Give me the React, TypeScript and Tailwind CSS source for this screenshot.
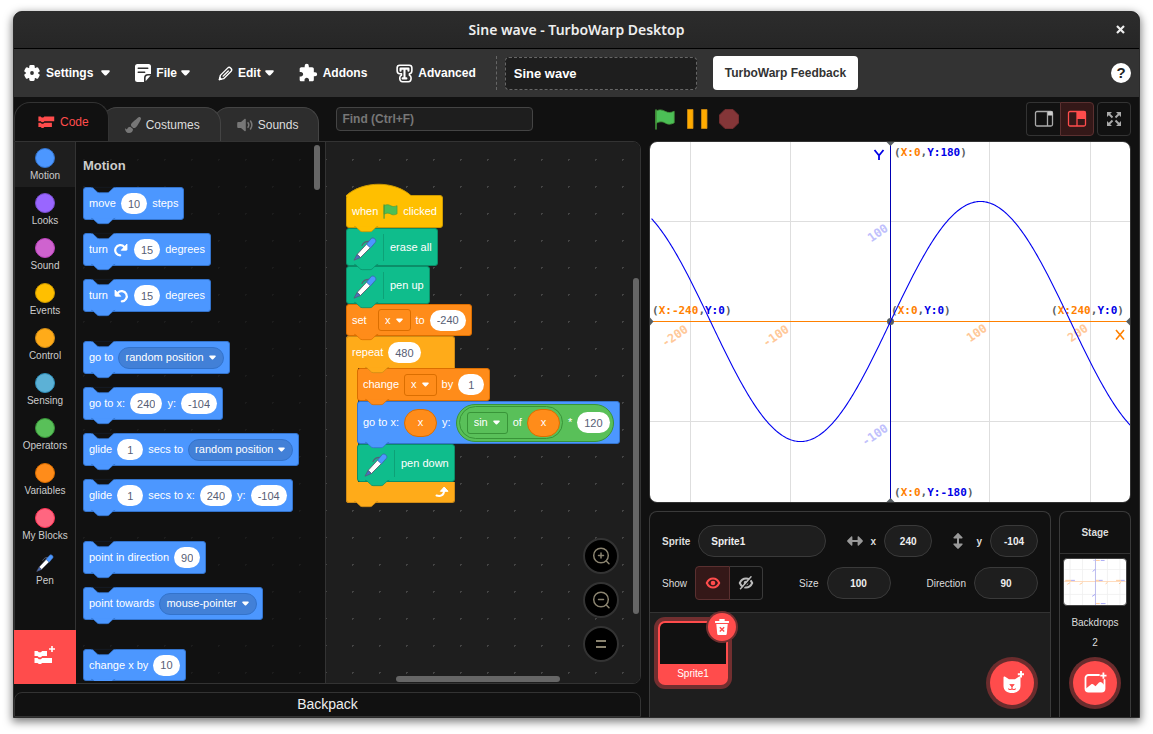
import React from "react";
import { MdExtension } from "react-icons/md";
import { FaPaintBrush } from "react-icons/fa";

type Tone = "motion" | "events" | "control" | "variables" | "operators" | "pen";

const tones: Record<Tone, { body: string; shape: string; menu: string }> = {
  motion: { body: "bg-[#4c97ff] border-[#3373cc]", shape: "fill-[#4c97ff] stroke-[#3373cc]", menu: "bg-[#4280d7] border-[#3373cc]" },
  events: { body: "bg-[#ffbf00] border-[#cc9900]", shape: "fill-[#ffbf00] stroke-[#cc9900]", menu: "bg-[#ffbf00] border-[#cc9900]" },
  control: { body: "bg-[#ffab19] border-[#cf8b17]", shape: "fill-[#ffab19] stroke-[#cf8b17]", menu: "bg-[#ffab19] border-[#cf8b17]" },
  variables: { body: "bg-[#ff8c1a] border-[#db6e00]", shape: "fill-[#ff8c1a] stroke-[#db6e00]", menu: "bg-[#ff8c1a] border-[#db6e00]" },
  operators: { body: "bg-[#59c059] border-[#389438]", shape: "fill-[#59c059] stroke-[#389438]", menu: "bg-[#59c059] border-[#389438]" },
  pen: { body: "bg-[#0fbd8c] border-[#0b8e69]", shape: "fill-[#0fbd8c] stroke-[#0b8e69]", menu: "bg-[#0fbd8c] border-[#0b8e69]" },
};

const notchPath = "M0 0c2 0 3 1 4 2l4 4c1 1 2 2 4 2h12c2 0 3 -1 4 -2l4 -4c1 -1 2 -2 4 -2";

function Bump({ tone, inner }: { tone: Tone; inner?: boolean }) {
  return (
    <svg
      viewBox="0 -2 40 12"
      className={`pointer-events-none absolute -bottom-[6px] z-10 h-[8px] w-[27px] ${inner ? "left-[18px]" : "left-[7px]"} ${tones[tone].shape}`}
      strokeWidth="1.200"
    >
      <path d="M0 -2h36v2.500H0z" stroke="none" />
      <path d={notchPath} />
    </svg>
  );
}

function Notch() {
  return (
    <svg viewBox="0 -2 40 12" className="pointer-events-none absolute -top-[2px] left-[7px] h-[8px] w-[27px] fill-[#121212] stroke-[#3373cc]" strokeWidth="1.200">
      <path d="M0 -2h36v2.500H0z" stroke="none" />
      <path d={notchPath} />
    </svg>
  );
}

function Block({
  tone,
  children,
  height = "h-[33px]",
  notch,
}: {
  tone: Tone;
  children?: React.ReactNode;
  height?: string;
  notch?: boolean;
}) {
  return (
    <div
      className={`relative flex w-max items-center gap-[5px] rounded-[3px] border px-[5px] text-[11px] leading-none whitespace-nowrap text-white ${height} ${tones[tone].body}`}
    >
      {notch && <Notch />}
      {children}
      <Bump tone={tone} />
    </div>
  );
}

function Num({ value, label }: { value: string; label: string }) {
  return (
    <input
      aria-label={label}
      defaultValue={value}
      className="field-sizing-content h-[21px] min-w-[26px] rounded-full bg-white px-[7px] text-center text-[11px] text-[#575e75] outline-none"
    />
  );
}

function Caret({ className = "" }: { className?: string }) {
  return (
    <svg viewBox="0 0 10 6" className={`fill-white ${className}`}>
      <path d="M1.400 0h7.200c1 0 1.500 1.100.8 1.800L6 5.400c-.6.600-1.400.600-2 0L.6 1.800C-.1 1.100.4 0 1.400 0z" />
    </svg>
  );
}

function Menu({ tone, value, label, round }: { tone: Tone; value: string; label: string; round?: boolean }) {
  return (
    <span className="relative flex items-center">
      <select
        aria-label={label}
        defaultValue={value}
        className={`field-sizing-content h-[22px] appearance-none border pr-[19px] pl-[6px] text-[11px] text-white outline-none ${round ? "rounded-full" : "rounded-[3px]"} ${tones[tone].menu}`}
      >
        <option>{value}</option>
      </select>
      <Caret className="pointer-events-none absolute right-[8px] h-[5px] w-[7px]" />
    </span>
  );
}

function VarX() {
  return (
    <span className="flex h-[28px] w-[33px] items-center justify-center rounded-full border border-[#db6e00] bg-[#ff8c1a]">x</span>
  );
}

function PenIcon({ className = "" }: { className?: string }) {
  return (
    <svg viewBox="0 0 24 24" className={className}>
      <path d="M9 8.500c1.500-3 4-4.500 8-4" fill="none" stroke="#575e75" strokeWidth="1.200" strokeLinecap="round" />
      <path d="M4 17.500 15.500 5l4 3.500L7.500 20.500z" fill="#fff" stroke="#575e75" strokeWidth=".9" strokeLinejoin="round" />
      <path d="M13.500 7.200 18.200 1.600c2-2 6 1.300 4.200 3.700L17.500 10.900z" fill="#4c97ff" stroke="#3a67a8" strokeWidth=".8" strokeLinejoin="round" />
      <path d="M4 17.500 1 23.200l6.500-2.700z" fill="#4c6fc0" stroke="#575e75" strokeWidth=".8" strokeLinejoin="round" />
    </svg>
  );
}

function PenLabel({ text }: { text: string }) {
  return (
    <>
      <PenIcon className="mt-[4px] ml-px size-[24px]" />
      <span className="mx-px h-[27px] w-px bg-[#0b8e69]/60" />
      {text}
    </>
  );
}

function Flag({ className = "" }: { className?: string }) {
  return (
    <svg viewBox="0 0 20 21" className={className}>
      <path d="M1 2.200c4-2.400 7-1 9.500.3 2.700 1.400 5 1.400 8.700-.2v11.500c-3.600 2-6.200 1.700-9 .2-2.700-1.500-5-1.800-9.200.3z" fill="#4cbf56" stroke="#45993d" strokeWidth=".8" />
      <path d="M1 1v19" stroke="#45993d" strokeWidth="1.600" strokeLinecap="round" />
    </svg>
  );
}

function Turn({ left }: { left?: boolean }) {
  return (
    <svg viewBox="0 0 16 16" className="size-[16px]">
      <g transform={left ? "matrix(-1 0 0 1 16 0)" : undefined}>
        <path d="M7.200 13.300A5.100 5.100 0 1 1 11.300 5" fill="none" stroke="#fff" strokeWidth="2.200" strokeLinecap="round" />
        <path d="M14 2v5.600c0 .5-.3.700-.8.700H8.200z" fill="#fff" stroke="#fff" strokeWidth=".8" strokeLinejoin="round" />
      </g>
    </svg>
  );
}

function BlocksIcon({ className = "", plus }: { className?: string; plus?: boolean }) {
  return (
    <svg viewBox="0 0 22 18" className={`fill-current ${className}`}>
      <path d={plus ? "M.5 5h3l1.300 1.200h2L8.200 5H13v5H8.200l-1.300 1.200h-2L3.500 10h-3z" : "M.5 2h3l1.300 1.200h2L8.200 2H21v6H8.200L6.900 9.200h-2L3.500 8h-3z"} />
      <path d={plus ? "M.5 12h3l1.300 1.200h2L8.200 12H18v5H8.200l-1.300 1h-2l-1.400-1h-3z" : "M.5 10h3l1.300 1.200h2L8.200 10H18v5.500H8.200l-1.300 1.200h-2l-1.400-1.200h-3z"} />
      {plus && <path d="M17.200 0h1.600v2.200H21v1.600h-2.200V6h-1.600V3.800H15V2.200h2.200z" />}
    </svg>
  );
}

function Gear() {
  return (
    <svg viewBox="0 0 20 20" className="size-[18px] fill-white">
      {[0, 60, 120, 180, 240, 300].map((a) => (
        <rect key={a} x="7" y="1.200" width="6" height="6" rx="1.500" transform={`rotate(${a} 10 10)`} />
      ))}
      <circle cx="10" cy="10" r="6.600" />
      <circle cx="10" cy="10" r="2.100" className="fill-[#333]" />
    </svg>
  );
}

function FileIcon() {
  return (
    <svg viewBox="0 0 16 18" className="h-[18px] w-[16px]">
      <path d="M2.500 0h11A2.500 2.500 0 0 1 16 2.500v7.500H13a4 4 0 0 0-4 4v4H2.500A2.500 2.500 0 0 1 0 15.500v-13A2.500 2.500 0 0 1 2.500 0z" fill="#fff" />
      <path d="M10.600 17.300V14a2.500 2.500 0 0 1 2.500-2.500h2.500z" fill="#fff" />
      <path d="M3.200 4.300h9.600M3.200 8.200h6.500" stroke="#333" strokeWidth="1.400" strokeLinecap="round" />
    </svg>
  );
}

function EditIcon() {
  return (
    <svg viewBox="0 0 16 16" className="size-[15px]" fill="none" stroke="#fff" strokeWidth="1.500" strokeLinejoin="round" strokeLinecap="round">
      <path d="M1.500 14.500l1-4.500 8-8c1.900-1.900 5.400 1.500 3.500 3.500l-8 8z" />
      <path d="M5.500 10.800l5.500-5.500" strokeWidth="1.500" />
      <path d="M1.500 14.500l.5-2 1.500 1.500z" fill="#fff" />
    </svg>
  );
}

function AdvancedIcon() {
  return (
    <svg viewBox="0 0 18 20" className="h-[19px] w-[17px]" fill="none" strokeLinecap="round" strokeLinejoin="round">
      <path
        d="M4 1.200h10c1.800 0 2.800 1 2.800 2.800v3.200c0 2-.9 3-2.600 3v1.600c1.300.4 1.800 1.400 1.800 2.900 0 2.700-1 4-3 4H7c-2 0-3-1.300-3-4 0-1.500.5-2.500 1.800-2.900v-1.600H3.800c-1.700 0-2.600-1-2.600-3V4C1.200 2.200 2.200 1.200 4 1.200z"
        stroke="#fff"
        strokeWidth="1.700"
      />
      <path d="M4.800 7V4.800h8.400V7M9 5v10M7 15.200h4" stroke="#fff" strokeWidth="2.200" />
    </svg>
  );
}

function SpeakerIcon() {
  return (
    <svg viewBox="0 0 16 14" className="h-[14px] w-[16px]">
      <path d="M1.500 4H4l3.500-3c.6-.5 1.300-.2 1.300.6v10.800c0 .8-.7 1.100-1.300.6L4 10H1.500C.7 10 .2 9.500.2 8.700V5.300C.2 4.500.7 4 1.500 4z" fill="#777" />
      <path d="M11 4.800c1 1.400 1 3 0 4.400M13.500 3c1.700 2.500 1.700 5.500 0 8" fill="none" stroke="#777" strokeWidth="1.500" strokeLinecap="round" />
    </svg>
  );
}

function MenuButton({ icon, label, caret, className = "" }: { icon: React.ReactNode; label: string; caret?: string; className?: string }) {
  return (
    <button className={`flex items-center ${className}`}>
      {icon}
      <span className="ml-[5px]">{label}</span>
      {caret && <Caret className={`h-[6px] w-[9px] ${caret}`} />}
    </button>
  );
}

const categories = [
  ["Motion", "bg-[#4c97ff] border-[#3373cc]"],
  ["Looks", "bg-[#9966ff] border-[#774dcb]"],
  ["Sound", "bg-[#cf63cf] border-[#bd42bd]"],
  ["Events", "bg-[#ffbf00] border-[#cc9900]"],
  ["Control", "bg-[#ffab19] border-[#cf8b17]"],
  ["Sensing", "bg-[#5cb1d6] border-[#2e8eb8]"],
  ["Operators", "bg-[#59c059] border-[#389438]"],
  ["Variables", "bg-[#ff8c1a] border-[#db6e00]"],
  ["My Blocks", "bg-[#ff6680] border-[#ff3355]"],
  ["Pen", ""],
];

function Categories() {
  return (
    <nav className="flex w-[61px] shrink-0 flex-col border-r border-[#333]">
      <div className="flex min-h-0 flex-1 flex-col overflow-hidden">
        {categories.map(([name, color], i) => (
          <button key={name} className={`flex h-[45px] shrink-0 flex-col items-center pt-[6px] text-[10px] text-[#ccc] ${i === 0 ? "bg-[#1e1e1e]" : ""}`}>
            {color ? <span className={`size-[20px] rounded-full border ${color}`} /> : <PenIcon className="my-[1px] size-[18px]" />}
            <span className="mt-px leading-[14px] whitespace-nowrap">{name}</span>
          </button>
        ))}
      </div>
      <button aria-label="Add Extension" className="-mx-px -mb-px flex h-[54px] shrink-0 items-center justify-center bg-[#ff4c4c] pb-[4px] text-white">
        <BlocksIcon plus className="h-[18px] w-[22px]" />
      </button>
    </nav>
  );
}

function Palette() {
  return (
    <section className="relative w-[250px] shrink-0 overflow-hidden border-r border-[#333] pb-[2px]">
      <div className="flex h-full flex-col gap-[29px] overflow-hidden bg-[radial-gradient(circle,#1c1c1c_1px,transparent_1px)] bg-[length:27px_27px] bg-[position:-6px_4px] pl-[7px]">
        <div className="flex flex-col gap-[13px]">
          <h2 className="-mb-px pt-[15px] text-[13px] leading-[18px] font-bold text-[#ccc]">Motion</h2>
          <Block tone="motion" notch>move <Num value="10" label="steps" /> steps</Block>
          <Block tone="motion" notch>turn <Turn /> <Num value="15" label="degrees clockwise" /> degrees</Block>
          <Block tone="motion" notch>turn <Turn left /> <Num value="15" label="degrees counterclockwise" /> degrees</Block>
        </div>
        <div className="flex flex-col gap-[13px]">
          <Block tone="motion" notch>go to <Menu round tone="motion" value="random position" label="go to target" /></Block>
          <Block tone="motion" notch>go to x: <Num value="240" label="x" /> y: <Num value="-104" label="y" /></Block>
          <Block tone="motion" notch>glide <Num value="1" label="seconds" /> secs to <Menu round tone="motion" value="random position" label="glide target" /></Block>
          <Block tone="motion" notch>glide <Num value="1" label="seconds" /> secs to x: <Num value="240" label="x" /> y: <Num value="-104" label="y" /></Block>
        </div>
        <div className="flex flex-col gap-[13px]">
          <Block tone="motion" notch>point in direction <Num value="90" label="direction" /></Block>
          <Block tone="motion" notch>point towards <Menu round tone="motion" value="mouse-pointer" label="point target" /></Block>
        </div>
        <Block tone="motion" notch>change x by <Num value="10" label="change x" /></Block>
      </div>
      <div className="absolute top-[3px] right-[5px] h-[45px] w-[6px] rounded-full bg-[#666]" />
    </section>
  );
}

function Script() {
  return (
    <div className="absolute top-[53px] left-[20px] flex flex-col">
      <div className="relative">
        <Block tone="events">when <Flag className="size-[15px]" /> clicked</Block>
        <svg viewBox="0 -18 96 20" className="absolute -top-[12px] left-0 h-[14px] w-[65px] fill-[#ffbf00]">
          <path d="M0 2V0c25 -22 71 -22 96 0v2z" />
          <path d="M.7 0c25 -22 70 -22 95 0" fill="none" stroke="#cc9900" strokeWidth="1.400" />
        </svg>
      </div>
      <Block tone="pen" height="h-[38px]"><PenLabel text="erase all" /></Block>
      <Block tone="pen" height="h-[38px]"><PenLabel text="pen up" /></Block>
      <Block tone="variables" height="h-[32px]">
        <span className="min-w-[21px]">set</span> <Menu tone="variables" value="x" label="variable" /> to <Num value="-240" label="value" />
      </Block>
      <div className="relative flex w-max flex-col">
        <div className="absolute inset-y-0 left-0 w-[12px] rounded-[3px] border-l border-[#cf8b17] bg-[#ffab19]" />
        <div className="relative flex h-[32px] w-[109px] items-center gap-[5px] rounded-t-[3px] border border-b-0 border-[#cf8b17] bg-[#ffab19] px-[5px] text-[11px] text-white">
          repeat <Num value="480" label="times" />
          <Bump tone="control" inner />
        </div>
        <div className="relative flex flex-col pl-[11px]">
          <Block tone="variables">change <Menu tone="variables" value="x" label="variable" /> by <Num value="1" label="amount" /></Block>
          <Block tone="motion" height="h-[43px]">
            go to x: <VarX /> y:
            <span className="flex h-[38px] items-center gap-[5px] rounded-full border border-[#389438] bg-[#59c059] pr-[3px] pl-[2px]">
              <span className="flex h-[33px] items-center gap-[5px] rounded-full border border-[#389438] pr-[2px] pl-[7px]">
                <Menu tone="operators" value="sin" label="function" /> of <VarX />
              </span>
              * <Num value="120" label="multiplier" />
            </span>
          </Block>
          <Block tone="pen" height="h-[38px]"><PenLabel text="pen down" /></Block>
        </div>
        <div className="relative z-0 flex h-[21px] w-[109px] items-center justify-end rounded-b-[3px] border border-t-0 border-[#cf8b17] bg-[#ffab19] pr-[5px]">
          <svg viewBox="0 0 14 12" className="h-[12px] w-[14px]">
            <path d="M1.500 9.500c3.500 1 7.500.3 7.500-4.500" fill="none" stroke="#fff" strokeWidth="2" strokeLinecap="round" />
            <path d="M9.200 1 13 5.300H5.400z" fill="#fff" stroke="#fff" strokeLinejoin="round" />
          </svg>
          <Bump tone="control" />
        </div>
      </div>
    </div>
  );
}

function ZoomButton({ label, children }: { label: string; children: React.ReactNode }) {
  return (
    <button aria-label={label} className="flex size-[36px] items-center justify-center rounded-full border-2 border-[#333] bg-black">
      <svg viewBox="0 0 20 20" className="size-[20px]" fill="none" stroke="#8a836f" strokeWidth="1.500" strokeLinecap="round">
        {children}
      </svg>
    </button>
  );
}

function Workspace() {
  return (
    <section className="relative min-w-0 flex-1 overflow-hidden rounded-r-[7px] bg-[#1e1e1e] bg-[radial-gradient(circle,#444_1px,transparent_1px)] bg-[length:27px_27px] bg-[position:13px_4px]">
      <Script />
      <div className="absolute right-[21px] bottom-[21px] flex flex-col gap-[8px]">
        <ZoomButton label="Zoom in">
          <circle cx="10" cy="9.500" r="7.300" />
          <path d="M15.300 15 18 17.700M7.500 9.500h5M10 7v5" />
        </ZoomButton>
        <ZoomButton label="Zoom out">
          <circle cx="10" cy="9.500" r="7.300" />
          <path d="M15.300 15 18 17.700M7.500 9.500h5" />
        </ZoomButton>
        <ZoomButton label="Reset zoom">
          <path d="M5 7h10M5 13h10" strokeWidth="2" strokeLinecap="butt" />
        </ZoomButton>
      </div>
      <div className="absolute top-[136px] right-px bottom-[69px] w-[6px] rounded-full bg-[#666]" />
      <div className="absolute right-[80px] bottom-px left-[70px] h-[6px] rounded-full bg-[#666]" />
    </section>
  );
}

const curve = Array.from({ length: 480 }, (_, i) => {
  const x = i - 239;
  return `${i === 0 ? "M" : "L"}${x + 240.5} ${(179.5 - 120 * Math.sin((x * Math.PI) / 180)).toFixed(2)}`;
}).join("");

function Coord({ x, y, cx, cy }: { x: number; y: number; cx: string; cy: string }) {
  return (
    <text x={x} y={y} className="fill-[#575e62] font-['DejaVu_Sans_Mono',monospace] text-[11px] font-bold">
      (<tspan className="fill-[#ff8000]">X:{cx}</tspan>,<tspan className="fill-[#0000e6]">Y:{cy}</tspan>)
    </text>
  );
}

function Tick({ x, y, children, blue }: { x: number; y: number; children: string; blue?: boolean }) {
  return (
    <text
      x={x}
      y={y}
      transform={`rotate(-35 ${x} ${y})`}
      textAnchor="end"
      className={`font-['DejaVu_Sans_Mono',monospace] text-[12px] font-bold ${blue ? "fill-[#c0c0fc]" : "fill-[#ffc898]"}`}
    >
      {children}
    </text>
  );
}

function Plot() {
  return (
    <svg viewBox="0 0 480 360" className="block w-full bg-white">
      <path d="M40.500 0v360M140.500 0v360M339.500 0v360M440.500 0v360M0 79.500h480M0 279.500h480" stroke="#dedede" />
      <path d="M0 179.500h480" stroke="#ff8000" />
      <path d="M240.500 0v360" stroke="#0000b4" />
      <g fill="#575e62">
        <circle cx="240.500" cy="179.500" r="3.500" />
        <path d="M236.500 0h8l-4 4zM236.500 360h8l-4-4zM0 175.500v8l3.500-4zM480 175.500v8l-4-4z" />
      </g>
      <Tick x={39} y={189}>-200</Tick>
      <Tick x={140} y={189}>-100</Tick>
      <Tick x={338} y={188}>100</Tick>
      <Tick x={439} y={188}>200</Tick>
      <Tick x={239} y={88} blue>100</Tick>
      <Tick x={239} y={288} blue>-100</Tick>
      <Coord x={244} y={14} cx="0" cy="180" />
      <Coord x={2} y={172} cx="-240" cy="0" />
      <Coord x={241} y={172} cx="0" cy="0" />
      <Coord x={401} y={172} cx="240" cy="0" />
      <Coord x={244} y={354} cx="0" cy="-180" />
      <path d="M224.500 8l4.500 5.500v4.500M233.500 8l-4.500 5.500" fill="none" stroke="#0000e6" strokeWidth="1.800" />
      <path d="M466 188l8 9.500M474 188l-8 9.500" fill="none" stroke="#ff8000" strokeWidth="1.600" />
      <path d={curve} fill="none" stroke="#0000f0" strokeWidth="1.100" />
    </svg>
  );
}

function Eye({ off }: { off?: boolean }) {
  return (
    <svg viewBox="0 0 16 14" className="h-[14px] w-[16px]" fill="none" stroke="currentColor">
      <path d="M1.800 7C4.500 1 11.500 1 14.200 7 11.500 13 4.500 13 1.800 7z" strokeWidth="2" />
      <circle cx="8" cy="7" r="2.300" fill="currentColor" stroke="none" />
      {off && (
        <>
          <path d="M3.500 13.500 14 1.500" stroke="#111" strokeWidth="1.500" />
          <path d="M2.500 12.700 13 .8" strokeWidth="1.500" strokeLinecap="round" />
        </>
      )}
    </svg>
  );
}

const pill = "h-[32px] rounded-full border border-[#3a3a3a] bg-[#1e1e1e] text-[10px] font-bold text-[#eee] outline-none";

function SpritePanel() {
  return (
    <section className="flex min-w-0 flex-1 flex-col overflow-hidden rounded-t-[8px] border border-b-0 border-[#3a3a3a]">
      <div className="flex flex-col gap-[9px] border-b border-[#333] px-[12px] pt-[13px] pb-[12px] text-[10px] text-[#ddd]">
        <div className="flex items-center justify-between font-bold">
          <label className="flex items-center gap-[8px]">
            Sprite <input defaultValue="Sprite1" className={`w-[128px] px-[12px] ${pill}`} />
          </label>
          <label className="flex items-center gap-[8px]">
            <svg viewBox="0 0 16 12" className="h-[12px] w-[16px] fill-[#999]">
              <path d="M.4 5.300 4.200 1.600c.5-.5 1.200-.2 1.200.5V5h5.200V2.100c0-.7.7-1 1.200-.5l3.800 3.700c.4.400.4 1 0 1.400l-3.800 3.700c-.5.500-1.200.2-1.200-.5V7H5.400v2.900c0 .7-.7 1-1.200.5L.4 6.700c-.4-.4-.4-1 0-1.400z" />
            </svg>
            x <input defaultValue="240" className={`w-[48px] text-center ${pill}`} />
          </label>
          <label className="flex items-center gap-[8px]">
            <svg viewBox="0 0 12 16" className="mr-[4px] h-[16px] w-[12px] fill-[#999]">
              <path d="M5.300.4 1.600 4.200c-.5.500-.2 1.200.5 1.200H5v5.200H2.100c-.7 0-1 .7-.5 1.200l3.700 3.800c.4.400 1 .4 1.400 0l3.700-3.800c.5-.5.2-1.200-.5-1.200H7V5.400h2.900c.7 0 1-.7.5-1.200L6.700.4c-.4-.4-1-.4-1.400 0z" />
            </svg>
            y <input defaultValue="-104" className={`w-[48px] text-center ${pill}`} />
          </label>
        </div>
        <div className="flex items-center justify-between">
          <div className="flex items-center gap-[8px]">
            Show
            <div className="flex">
              <button aria-label="Show sprite" className="flex h-[34px] w-[35px] items-center justify-center rounded-l-[4px] border border-[#5a3030] bg-[#341818] text-[#ff4c4c]">
                <Eye />
              </button>
              <button aria-label="Hide sprite" className="flex h-[34px] w-[33px] items-center justify-center rounded-r-[4px] border border-l-0 border-[#3a3a3a] text-[#bbb]">
                <Eye off />
              </button>
            </div>
          </div>
          <label className="flex items-center gap-[8px]">
            Size <input defaultValue="100" className={`w-[64px] text-center ${pill}`} />
          </label>
          <label className="flex items-center gap-[8px]">
            Direction <input defaultValue="90" className={`w-[64px] text-center ${pill}`} />
          </label>
        </div>
      </div>
      <div className="relative flex-1 bg-[#1e1e1e] p-[8px]">
        <div className="relative w-[70px]">
          <button className="flex h-[64px] w-full flex-col overflow-hidden rounded-[7px] border-2 border-[#ff4c4c] bg-[#ff4c4c] shadow-[0_0_0_4px_#722f30]">
            <span className="w-full flex-1 rounded-t-[4px] bg-[#111]" />
            <span className="h-[19px] w-full text-center text-[10px] leading-[19px] text-white">Sprite1</span>
          </button>
          <button aria-label="Delete" className="absolute -top-[8px] -right-[8px] flex size-[28px] items-center justify-center rounded-full bg-[#ff4c4c] shadow-[0_0_0_2px_#722f30]">
            <svg viewBox="0 0 14 16" className="h-[16px] w-[14px]">
              <path d="M5 1h4M.5 3h13" stroke="#fff" strokeWidth="1.800" strokeLinecap="round" />
              <path d="M1.300 5h11.400l-.9 9.500c-.1 1-.6 1.500-1.500 1.500H3.700c-.9 0-1.400-.5-1.500-1.500z" fill="#fff" />
              <path d="M4.800 8.200l4.400 4.300M9.200 8.200l-4.400 4.300" stroke="#ff4c4c" strokeWidth="1.400" />
            </svg>
          </button>
        </div>
        <button aria-label="Choose a Sprite" className="absolute right-[16px] bottom-[12px] flex size-[44px] items-center justify-center rounded-full bg-[#ff4c4c] shadow-[0_0_0_4px_#6b2c2d]">
          <svg viewBox="0 0 24 24" className="size-[24px] fill-white">
            <path d="M4.800 5.600 9 8.200h6l4.200-2.600c.7-.4 1.300 0 1.300.8V15c0 4.500-3.800 7-8.500 7s-8.500-2.500-8.500-7V6.400c0-.8.6-1.200 1.300-.8z" />
            <path d="M9.800 13.500h4.400L12 16z" stroke="#ff4c4c" strokeLinejoin="round" strokeWidth=".8" className="fill-[#ff4c4c]" />
            <path d="M12 15.500v2c-.5 1.200-2.300 1.400-3.400.3M12 17.500c.5 1.200 2.300 1.400 3.400.3" fill="none" stroke="#ff4c4c" strokeWidth="1.100" strokeLinecap="round" />
            <path d="M22 0v2.200h2.200v2H22v2.200h-2V4.200h-2.200v-2H20V0z" />
          </svg>
        </button>
      </div>
    </section>
  );
}

function Thumbnail() {
  return (
    <svg viewBox="0 0 64 48" className="h-[48px] w-full rounded-[4px] border border-[#444] bg-white">
      <path d="M6 0v48M19 0v48M45 0v48M58 0v48M0 11h64M0 37h64" stroke="#eee" strokeWidth=".8" />
      <path d="M0 23.500h64" stroke="#ffd0a8" strokeWidth=".8" />
      <path d="M32.500 0v48" stroke="#a8a8e8" strokeWidth=".8" />
      <path d="M1 22.300h6M33 22.300h3M54 22.300h5M33 1.500h4M33 46.500h4M3 26.500l3-1.800M16 26.500l3-1.800M43 26l2-1.500M57 26l2-1.500" stroke="#ffb36b" strokeWidth=".7" />
      <path d="M7 22.300h4M36 22.300h4M59 22.300h4M38 1.500h4M38 46.500h5M29.500 13l2.500-2M29 39l3-2M30.500 1.500h1" stroke="#8080f0" strokeWidth=".7" />
    </svg>
  );
}

function StagePanel() {
  return (
    <section className="flex w-[72px] shrink-0 flex-col items-center rounded-t-[8px] border border-b-0 border-[#3a3a3a] text-[#ddd]">
      <h2 className="w-full border-b border-[#333] py-[13px] text-center text-[10px] leading-[15px] font-bold">Stage</h2>
      <div className="flex w-full flex-1 flex-col items-center px-[3px] pt-[4px] text-[10px]">
        <Thumbnail />
        <span className="mt-[9px] leading-[16px]">Backdrops</span>
        <span className="mt-[4px] leading-[16px]">2</span>
        <button aria-label="Choose a Backdrop" className="mt-auto mb-[12px] flex size-[44px] shrink-0 items-center justify-center rounded-full bg-[#ff4c4c] shadow-[0_0_0_4px_#6b2c2d]">
          <svg viewBox="0 0 24 24" className="size-[24px]">
            <path d="M16 4H5.500A3 3 0 0 0 2.500 7v10.500a3 3 0 0 0 3 3h13a3 3 0 0 0 3-3V9" fill="none" stroke="#fff" strokeWidth="1.800" strokeLinecap="round" />
            <path d="M3 17.500l5-4c1-.7 2-.5 3 .4l1.500 1.300L16 11.500c.8-.8 2-.8 2.800 0l2.700 2.700v4c0 1.500-1 2.600-2.500 2.600H5.500c-1.500 0-2.500-1-2.500-2.300z" fill="#fff" />
            <path d="M19.500 1.500h1.800v2.200h2.200v1.800h-2.200v2.200h-1.800V5.500h-2.200V3.700h2.200z" fill="#fff" />
          </svg>
        </button>
      </div>
    </section>
  );
}

function StageControls() {
  return (
    <div className="flex h-[44px] items-center pl-[5px]">
      <button aria-label="Go"><Flag className="h-[21px] w-[22px]" /></button>
      <button aria-label="Pause" className="ml-[11px]">
        <svg viewBox="0 0 21 20" className="h-[20px] w-[21px]" fill="#ffab00" stroke="#d08b10" strokeWidth=".8">
          <path d="M.5.5h5.500v19H.5zM14.500.5H20v19h-5.500z" />
        </svg>
      </button>
      <button aria-label="Stop" className="ml-[11px]">
        <svg viewBox="0 0 20 20" className="size-[20px]">
          <path d="M6 .5h8l5.500 5.500v8L14 19.500H6L.5 14V6z" fill="#843638" stroke="#702c2e" />
        </svg>
      </button>
      <div className="ml-auto flex">
        <button aria-label="Small stage" className="flex size-[34px] items-center justify-center rounded-l-[4px] border border-r-0 border-[#333]">
          <svg viewBox="0 0 20 18" className="h-[18px] w-[20px]">
            <rect x="1.500" y="1.500" width="17" height="14.500" rx="1.500" fill="none" stroke="#aaa" strokeWidth="1.300" />
            <path d="M13.500 1.500V16" stroke="#aaa" strokeWidth="1.300" />
            <path d="M14 1.500h4.500v4H14z" fill="#ccc" />
          </svg>
        </button>
        <button aria-label="Large stage" className="flex size-[34px] items-center justify-center rounded-r-[4px] border border-[#5a3030] bg-[#341818]">
          <svg viewBox="0 0 20 18" className="h-[18px] w-[20px]">
            <rect x="1.500" y="1.500" width="17" height="14.500" rx="1.500" fill="none" stroke="#ff4c4c" strokeWidth="1.300" />
            <path d="M10 1.500V16" stroke="#ff4c4c" strokeWidth="1.300" />
            <path d="M10 1.500h8.500V9H10z" fill="#ff4c4c" />
          </svg>
        </button>
      </div>
      <button aria-label="Full screen" className="ml-[3px] flex size-[34px] items-center justify-center rounded-[4px] border border-[#333]">
        <svg viewBox="0 0 16 16" className="size-[16px]">
          <path d="M1 1h5L1 6zM15 1v5l-5-5zM1 15v-5l5 5zM15 15h-5l5-5z" fill="#aaa" />
          <path d="M2.500 2.500l4 4M13.500 2.500l-4 4M2.500 13.500l4-4M13.500 13.500l-4-4" stroke="#aaa" strokeWidth="1.900" />
        </svg>
      </button>
    </div>
  );
}

export default function App() {
  return (
    <div className="h-screen bg-white px-[13px] pt-[11px] pb-[16px] font-['Liberation_Sans',Arial,sans-serif]">
      <div className="flex h-full flex-col overflow-hidden rounded-t-[9px] border border-[#2c2c2c] bg-[#111] shadow-[0_3px_9px_1px_rgba(0,0,0,0.5)]">
        <header className="relative flex h-[37px] shrink-0 items-center justify-center border-b border-black bg-linear-to-b from-[#2c2c2c] to-[#262626] pb-[2px]">
          <h1 className="font-['Noto_Sans',sans-serif] text-[14px] font-semibold text-[#eee]">Sine wave - TurboWarp Desktop</h1>
          <button aria-label="Close" className="absolute right-[14px]">
            <svg viewBox="0 0 9 9" className="size-[9px]">
              <path d="M1 1l7 7M8 1l-7 7" stroke="#eee" strokeWidth="2.200" />
            </svg>
          </button>
        </header>

        <div className="flex h-[48px] shrink-0 items-center bg-[#333] pr-[8px] pl-[9px] text-[12px] font-bold text-white">
          <MenuButton icon={<Gear />} label="Settings" caret="ml-[8px]" />
          <MenuButton icon={<FileIcon />} label="File" caret="ml-[4px]" className="ml-[25px]" />
          <MenuButton icon={<EditIcon />} label="Edit" caret="ml-[4px]" className="ml-[28px]" />
          <MenuButton icon={<MdExtension className="size-[20px]" />} label="Addons" className="ml-[24px]" />
          <MenuButton icon={<AdvancedIcon />} label="Advanced" className="ml-[29px]" />
          <div className="ml-[20px] h-[34px] border-l border-dashed border-[#666]" />
          <input
            aria-label="Project title"
            defaultValue="Sine wave"
            className="ml-[8px] h-[33px] w-[192px] rounded-[4px] border border-dashed border-[#666] bg-[#1e1e1e] px-[8px] text-[13px] font-bold outline-none"
          />
          <button className="ml-[16px] h-[34px] rounded-[4px] bg-white px-[12px] whitespace-nowrap text-[#333]">TurboWarp Feedback</button>
          <button aria-label="Help" className="ml-auto flex size-[20px] items-center justify-center rounded-full bg-white text-[15px] text-[#222]">?</button>
        </div>

        <main className="flex min-h-0 flex-1 gap-[8px] pr-[8px]">
          <div className="flex min-w-0 flex-1 flex-col">
            <div className="flex h-[44px] shrink-0 items-end text-[12px] text-[#ddd]">
              <button className="relative z-20 flex h-[39px] items-center gap-[5px] rounded-t-[16px] border border-b-0 border-[#333] bg-[#111] pr-[19px] pl-[23px] text-[#ff4c4c]">
                <BlocksIcon className="h-[14px] w-[17px]" /> Code
              </button>
              <button className="relative z-10 -ml-[8px] flex h-[34px] items-center gap-[5px] rounded-t-[16px] border border-b-0 border-[#444] bg-[#2d2d2d] pr-[20px] pl-[23px]">
                <FaPaintBrush className="size-[16px] text-[#777]" /> Costumes
              </button>
              <button className="-ml-[8px] flex h-[34px] items-center gap-[5px] rounded-t-[16px] border border-b-0 border-[#444] bg-[#2d2d2d] pr-[20px] pl-[23px]">
                <SpeakerIcon /> Sounds
              </button>
              <input
                aria-label="Find"
                placeholder="Find (Ctrl+F)"
                className="mb-[10px] ml-[17px] h-[24px] w-[197px] rounded-[4px] border border-[#444] bg-[#1e1e1e] px-[5px] font-bold outline-none placeholder:text-[#777]"
              />
            </div>
            <div className="flex min-h-0 flex-1 rounded-r-[8px] border border-[#333]">
              <Categories />
              <Palette />
              <Workspace />
            </div>
            <button className="mt-[8px] h-[25px] shrink-0 rounded-t-[8px] border border-[#333] text-[14px] leading-[23px] text-[#eee]">Backpack</button>
          </div>

          <div className="flex w-[482px] shrink-0 flex-col">
            <StageControls />
            <div className="overflow-hidden rounded-[8px] border border-[#333]">
              <Plot />
            </div>
            <div className="mt-[8px] flex min-h-0 flex-1 gap-[8px]">
              <SpritePanel />
              <StagePanel />
            </div>
          </div>
        </main>
      </div>
    </div>
  );
}
